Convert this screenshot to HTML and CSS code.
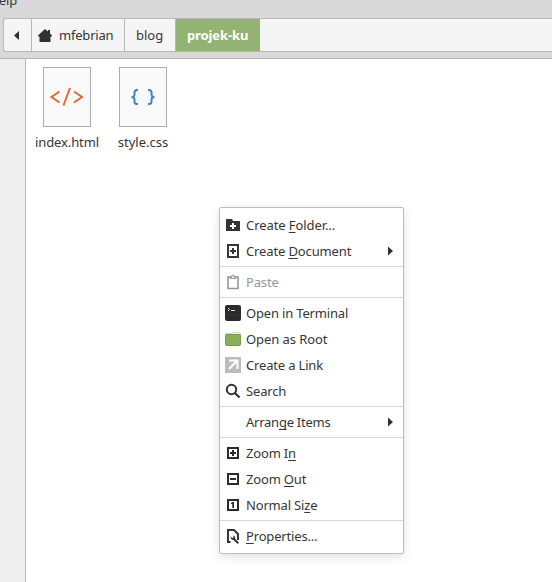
FILE: index.html
```html
<!DOCTYPE html>
<html lang="en">
<head>
<meta charset="utf-8">
<title>projek-ku</title>
<link rel="stylesheet" href="styles.css">
</head>
<body>
<div class="window">
  <header class="toolbar">
    <div class="menubar">Help</div>
    <nav class="pathbar">
      <button class="crumb back"><svg width="5" height="9" viewBox="0 0 5 9"><path d="M5 0v9L0 4.500z" fill="#303030"/></svg></button>
      <button class="crumb home"><svg width="14" height="13" viewBox="0 0 14 13"><path d="M7 0l3 2.500V1h2v3.500l2 2V7.500h-1.500V13h-11V7.500H0v-1z" fill="#303030"/></svg><span>mfebrian</span></button>
      <button class="crumb blog"><span>blog</span></button>
      <button class="crumb current"><span>projek-ku</span></button>
    </nav>
  </header>
  <div class="content">
    <aside class="sidebar"></aside>
    <main class="files">
      <div class="file html">
        <svg class="page" width="48" height="60" viewBox="0 0 48 60"><rect x=".5" y=".5" width="47" height="59" fill="#f9f9f9" stroke="#adadad"/><g fill="none" stroke="#dc6a35" stroke-width="2"><path d="M16.500 24.500L8.500 30l8 5.500M31 24.500l8 5.500-8 5.500M27 21l-6.500 17.500"/></g></svg>
        <span>index.html</span>
      </div>
      <div class="file css">
        <svg class="page" width="48" height="60" viewBox="0 0 48 60"><rect x=".5" y=".5" width="47" height="59" fill="#f9f9f9" stroke="#adadad"/><g fill="none" stroke="#4184c8" stroke-width="2"><path d="M19 23h-1q-2.500 0-2.500 2.500v2q0 2.500-3 2.500q3 0 3 2.500v2q0 2.500 2.500 2.500h1M29 23h1q2.500 0 2.500 2.500v2q0 2.500 3 2.500q-3 0-3 2.500v2q0 2.500-2.500 2.500h-1"/></g></svg>
        <span>style.css</span>
      </div>
    </main>
  </div>
</div>
<div class="menu" role="menu">
  <div class="item"><svg class="icon" viewBox="0 0 16 16"><path d="M1 2h6l1 2h7v10H1z" fill="#343434"/><path d="M8 6v6M5 9h6" stroke="#fff" stroke-width="2"/></svg><span class="t-folder">Create <u>F</u>older...</span></div>
  <div class="item"><svg class="icon" viewBox="0 0 16 16"><path d="M3 2h10v12H3z" fill="none" stroke="#343434" stroke-width="2"/><path d="M8 5v6M5 8h6" stroke="#343434" stroke-width="2"/></svg><span class="t-document">Create <u>D</u>ocument</span><svg class="arrow" width="5" height="10" viewBox="0 0 5 10"><path d="M0 .5v9L5 5z" fill="#303030"/></svg></div>
  <hr>
  <div class="item disabled"><svg class="icon" viewBox="0 0 16 16"><path d="M3 3h10v11.500H3z" fill="none" stroke="#969696" stroke-width="1.600"/><path d="M5 2h1.500q0-1.500 1.500-1.500T9.500 2H11v3H5z" fill="#969696"/><path d="M7.300 2h1.400M6.500 3.500h3" stroke="#fff"/></svg><span class="t-paste">Paste</span></div>
  <hr>
  <div class="item"><svg class="icon" viewBox="0 0 16 16"><rect width="16" height="16" rx="2" fill="#2b2b2b"/><path d="M.5 10h15" stroke="#363636"/><path d="M3 3l1.500 1.500L3 6M6 5.500h4" fill="none" stroke="#ddd"/></svg><span class="t-terminal">Open in Terminal</span></div>
  <div class="item"><svg class="icon" viewBox="0 0 16 16"><path d="M.5 3V2.500h6L8 1.500h6.500l1 1V4H.5z" fill="#f2f5ed" stroke="#b5c49e" stroke-width=".6"/><rect x=".5" y="3.500" width="15" height="11" rx="1" fill="#8aae5a" stroke="#76994a"/></svg><span class="t-root">Open as Root</span></div>
  <div class="item"><svg class="icon" viewBox="0 0 16 16"><path d="M0 0h16v16H0z" fill="#bcbcbc"/><path d="M4 3.500h8.500V12M12 4L4 12" fill="none" stroke="#fff" stroke-width="2"/></svg><span class="t-link">Create a Link</span></div>
  <div class="item"><svg class="icon" viewBox="0 0 16 16"><circle cx="6.500" cy="6.500" r="4.700" fill="none" stroke="#343434" stroke-width="2"/><path d="M9.700 9.700l4.800 4.800" stroke="#343434" stroke-width="2.300"/></svg><span class="t-search">Search</span></div>
  <hr>
  <div class="item"><i class="icon"></i><span class="t-arrange">Arran<u>g</u>e Items</span><svg class="arrow" width="5" height="10" viewBox="0 0 5 10"><path d="M0 .5v9L5 5z" fill="#303030"/></svg></div>
  <hr>
  <div class="item"><svg class="icon" viewBox="0 0 16 16"><path d="M3 3h10v10H3zM8 5v6M5 8h6" fill="none" stroke="#2b2b2b" stroke-width="2"/></svg><span class="t-in">Zoom I<u>n</u></span></div>
  <div class="item"><svg class="icon" viewBox="0 0 16 16"><path d="M3 3h10v10H3zM5 8h6" fill="none" stroke="#2b2b2b" stroke-width="2"/></svg><span class="t-out">Zoom <u>O</u>ut</span></div>
  <div class="item"><svg class="icon" viewBox="0 0 16 16"><path d="M3 3h10v10H3z" fill="none" stroke="#2b2b2b" stroke-width="2"/><path d="M7.500 5H9v6H7.300V7H6V6z" fill="#2b2b2b"/></svg><span class="t-size">Normal Si<u>z</u>e</span></div>
  <hr>
  <div class="item"><svg class="icon" viewBox="0 0 16 16"><path d="M5.500 14H3V2h6l4 4v6" fill="none" stroke="#343434" stroke-width="2"/><path d="M5.500 8l1.500 2 1.500-.5V7.200q2.300 1.300 1.700 3.500L14 14.500 12.500 16l-4-4q-3 0-3-4z" fill="#343434"/></svg><span class="t-properties"><u>P</u>roperties...</span></div>
</div>
</body>
</html>
```
FILE: styles.css
```css
* { box-sizing: border-box; }
body {
  margin: 0;
  width: 552px;
  height: 582px;
  overflow: hidden;
  background: #fff;
  color: #363636;
  font: 13px/18px "Noto Sans", "Open Sans", sans-serif;
}
svg { display: block; flex: none; }
span { white-space: nowrap; }
.window { display: flex; flex-direction: column; height: 582px; }
.toolbar { height: 59px; background: #d9d9d9; border-bottom: 1px solid #b5b5b5; overflow: hidden; }
.menubar { height: 18px; margin: -9px 0 9px -11px; }
.pathbar {
  display: flex;
  height: 34px;
  margin-left: 3px;
  background: #f5f5f5;
  border: 1px solid #b8b8b8;
  border-right: 0;
  border-radius: 3px 0 0 3px;
}
.crumb {
  display: flex;
  align-items: center;
  padding: 0;
  border: 0;
  border-right: 1px solid #b8b8b8;
  background: transparent;
  color: inherit;
  font: inherit;
}
.back { width: 28px; padding-left: 10px; }
.home { width: 93px; padding-left: 6px; gap: 7px; letter-spacing: -.3px; }
.blog { width: 51px; padding-left: 11px; }
.current { width: 84px; padding-left: 11px; border: 0; background: #92b372; color: #fff; font-weight: 700; letter-spacing: -.1px; }
.home { letter-spacing: -.2px; }
.content { display: flex; flex: 1; }
.sidebar { width: 26px; background: #efefef; border-right: 1px solid #bababa; }
.files { display: flex; align-items: flex-start; padding: 8px 0 0 3px; }
.file { display: flex; flex-direction: column; align-items: center; gap: 6px; width: 76px; }
.html span { letter-spacing: -.1px; }
.menu {
  position: absolute;
  left: 219px;
  top: 207px;
  width: 185px;
  height: 347px;
  padding: 4px 0;
  background: #fff;
  border: 1px solid #bcbcbc;
  border-radius: 2px;
  box-shadow: 0 3px 10px rgba(0, 0, 0, .12);
}
.item { display: flex; align-items: center; height: 26px; padding: 0 10px 0 5px; letter-spacing: -.17px; }
.t-folder, .t-root { letter-spacing: -.08px; }
.t-document { letter-spacing: -.13px; }
.t-arrange { letter-spacing: -.25px; }
.icon { width: 16px; height: 16px; margin-right: 5px; flex: none; }
.arrow { margin-left: auto; }
.disabled { color: #969696; }
hr { width: 100%; height: 1px; margin: 2px 0; border: 0; background: #d6d6d6; }
u { text-underline-offset: 2px; text-decoration-thickness: 1px; text-decoration-skip-ink: none; }
```
